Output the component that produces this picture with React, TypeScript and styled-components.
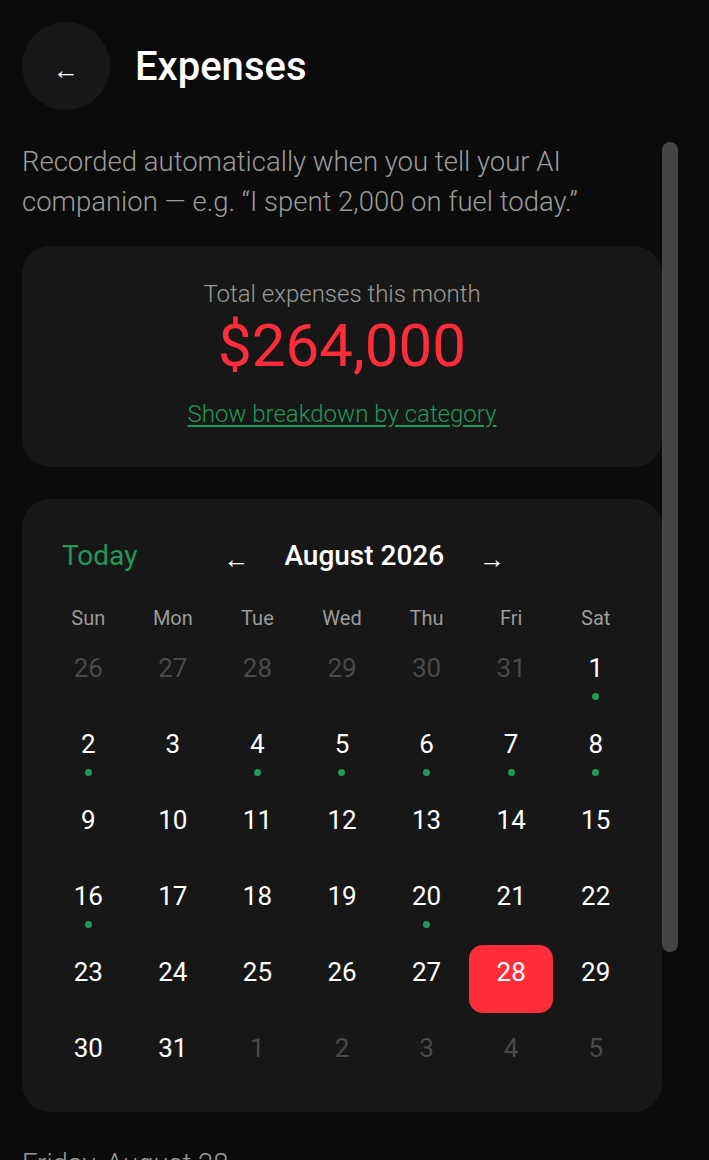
import React, { useEffect, useRef, useState } from "react";
import styled, { createGlobalStyle } from "styled-components";

const GlobalStyle = createGlobalStyle`
  html, body {
    margin: 0;
    height: 100%;
    overflow: hidden;
    background: #0b0b0b;
  }
  body {
    font-family: Roboto, "Liberation Sans", sans-serif;
    color: #ffffff;
  }
  * {
    box-sizing: border-box;
  }
`;

const GREEN = "#21995a";
const RED = "#ff2d3a";
const MUTED = "#9b9b9b";
const CARD = "#171717";

const Page = styled.div`
  height: 100vh;
  display: flex;
  flex-direction: column;
  padding: 22px 31px 0 22px;
`;

const Header = styled.header`
  display: flex;
  align-items: center;
  gap: 25px;
  height: 88px;
  flex-shrink: 0;
`;

const BackButton = styled.button`
  width: 88px;
  height: 88px;
  border-radius: 50%;
  border: none;
  background: ${CARD};
  color: #ffffff;
  font-family: inherit;
  font-size: 26px;
  display: flex;
  align-items: center;
  justify-content: center;
  padding: 8px 0 0;
  cursor: pointer;
`;

const Title = styled.h1`
  margin: 0;
  font-size: 40px;
  font-weight: 500;
`;

const Body = styled.div`
  margin-top: 32px;
  flex: 1;
  min-height: 0;
  display: flex;
`;

const Scroll = styled.main`
  flex: 1;
  min-width: 0;
  overflow-y: auto;
  scrollbar-width: none;
`;

const Rail = styled.div`
  width: 16px;
  flex-shrink: 0;
`;

const Thumb = styled.div`
  width: 16px;
  border-radius: 8px;
  background: #454545;
`;

const Content = styled.div`
  padding-bottom: 93px;
`;

const Intro = styled.p`
  margin: 0;
  font-size: 27.5px;
  line-height: 40px;
  font-weight: 300;
  color: ${MUTED};
`;

const Card = styled.section<{ $gap: number }>`
  margin-top: ${(p) => p.$gap}px;
  background: ${CARD};
  border-radius: 28px;
`;

const Summary = styled(Card)`
  padding: 32px 24px 37px;
  text-align: center;
`;

const SummaryLabel = styled.div`
  font-size: 24px;
  line-height: 32px;
  font-weight: 300;
  color: ${MUTED};
`;

const Amount = styled.div`
  font-size: 60px;
  line-height: 72px;
  color: ${RED};
`;

const LinkButton = styled.button`
  margin-top: 16px;
  padding: 0;
  border: none;
  background: none;
  font-family: inherit;
  font-size: 24px;
  line-height: 32px;
  font-weight: 300;
  color: ${GREEN};
  text-decoration: underline;
  text-underline-offset: 3px;
  cursor: pointer;
`;

const Calendar = styled(Card)`
  padding: 24px 24px 23px;
`;

const CalHeader = styled.div`
  display: flex;
  align-items: center;
  height: 64px;
`;

const TodayButton = styled.button`
  padding: 0 16px;
  border: none;
  background: none;
  font-family: inherit;
  font-size: 28px;
  color: ${GREEN};
  cursor: pointer;
`;

const Nav = styled.div`
  display: flex;
  align-items: center;
  gap: 26px;
  margin-left: 61px;
`;

const ArrowButton = styled.button`
  width: 44px;
  border: none;
  background: none;
  color: #ffffff;
  font-family: inherit;
  font-size: 26px;
  padding: 8px 0 0;
  cursor: pointer;
`;

const MonthLabel = styled.div`
  font-size: 28px;
  font-weight: 500;
`;

const WeekRow = styled.div`
  display: grid;
  grid-template-columns: repeat(7, 1fr);
  margin-top: 16px;
  font-size: 20px;
  line-height: 30px;
  color: ${MUTED};
  text-align: center;
`;

const DayGrid = styled.div`
  display: grid;
  grid-template-columns: repeat(7, 1fr);
  row-gap: 8px;
  margin-top: 8px;
`;

const DayCell = styled.button<{ $selected: boolean }>`
  height: 68px;
  padding: 10px 0 0;
  border: none;
  border-radius: 14px;
  background: ${(p) => (p.$selected ? RED : "transparent")};
  display: flex;
  flex-direction: column;
  align-items: center;
  font-family: inherit;
  cursor: pointer;
`;

const DayNum = styled.span<{ $muted: boolean }>`
  font-size: 26px;
  line-height: 34px;
  color: ${(p) => (p.$muted ? "#4a4a4a" : "#ffffff")};
`;

const Dot = styled.span`
  width: 7px;
  height: 7px;
  margin-top: 8px;
  border-radius: 50%;
  background: ${GREEN};
`;

const DayTitle = styled.h2`
  margin: 32px 0 0;
  font-size: 27.5px;
  line-height: 40px;
  font-weight: 300;
  color: ${MUTED};
`;

const Empty = styled(Card)`
  padding: 48px 24px;
  text-align: center;
  font-size: 22px;
  line-height: 32px;
  font-weight: 300;
  color: ${MUTED};
`;

const WEEKDAYS = ["Sun", "Mon", "Tue", "Wed", "Thu", "Fri", "Sat"];
const WITH_EXPENSES = [1, 2, 4, 5, 6, 7, 8, 16, 20];

type Day = { n: number; inMonth: boolean };

const buildDays = (): Day[] => {
  const days: Day[] = [];
  for (let n = 26; n <= 31; n++) days.push({ n, inMonth: false });
  for (let n = 1; n <= 31; n++) days.push({ n, inMonth: true });
  for (let n = 1; n <= 5; n++) days.push({ n, inMonth: false });
  return days;
};

const App = () => {
  const [selected, setSelected] = useState(28);
  const [thumb, setThumb] = useState({ top: 0, height: 0 });
  const scrollRef = useRef<HTMLElement>(null);
  const days = buildDays();

  const measure = () => {
    const el = scrollRef.current;
    if (!el) return;
    const ratio = el.clientHeight / el.scrollHeight;
    setThumb({ top: el.scrollTop * ratio, height: el.clientHeight * ratio });
  };

  useEffect(() => {
    measure();
    window.addEventListener("resize", measure);
    return () => window.removeEventListener("resize", measure);
  }, []);

  return (
    <>
      <GlobalStyle />
      <Page>
        <Header>
          <BackButton aria-label="Back">←</BackButton>
          <Title>Expenses</Title>
        </Header>
        <Body>
          <Scroll ref={scrollRef} onScroll={measure}>
            <Content>
              <Intro>
                Recorded automatically when you tell your AI companion — e.g. “I spent 2,000 on fuel
                today.”
              </Intro>

              <Summary $gap={24}>
                <SummaryLabel>Total expenses this month</SummaryLabel>
                <Amount>$264,000</Amount>
                <LinkButton>Show breakdown by category</LinkButton>
              </Summary>

              <Calendar $gap={32}>
                <CalHeader>
                  <TodayButton onClick={() => setSelected(28)}>Today</TodayButton>
                  <Nav>
                    <ArrowButton aria-label="Previous month">←</ArrowButton>
                    <MonthLabel>August 2026</MonthLabel>
                    <ArrowButton aria-label="Next month">→</ArrowButton>
                  </Nav>
                </CalHeader>
                <WeekRow>
                  {WEEKDAYS.map((d) => (
                    <div key={d}>{d}</div>
                  ))}
                </WeekRow>
                <DayGrid>
                  {days.map((d, i) => (
                    <DayCell
                      key={i}
                      $selected={d.inMonth && d.n === selected}
                      onClick={() => d.inMonth && setSelected(d.n)}
                    >
                      <DayNum $muted={!d.inMonth}>{d.n}</DayNum>
                      {d.inMonth && WITH_EXPENSES.includes(d.n) && <Dot />}
                    </DayCell>
                  ))}
                </DayGrid>
              </Calendar>

              <DayTitle>Friday, August {selected}</DayTitle>
              <Empty $gap={16}>No expenses recorded for this day.</Empty>
            </Content>
          </Scroll>
          <Rail>
            <Thumb style={{ height: thumb.height, transform: `translateY(${thumb.top}px)` }} />
          </Rail>
        </Body>
      </Page>
    </>
  );
};

export default App;
